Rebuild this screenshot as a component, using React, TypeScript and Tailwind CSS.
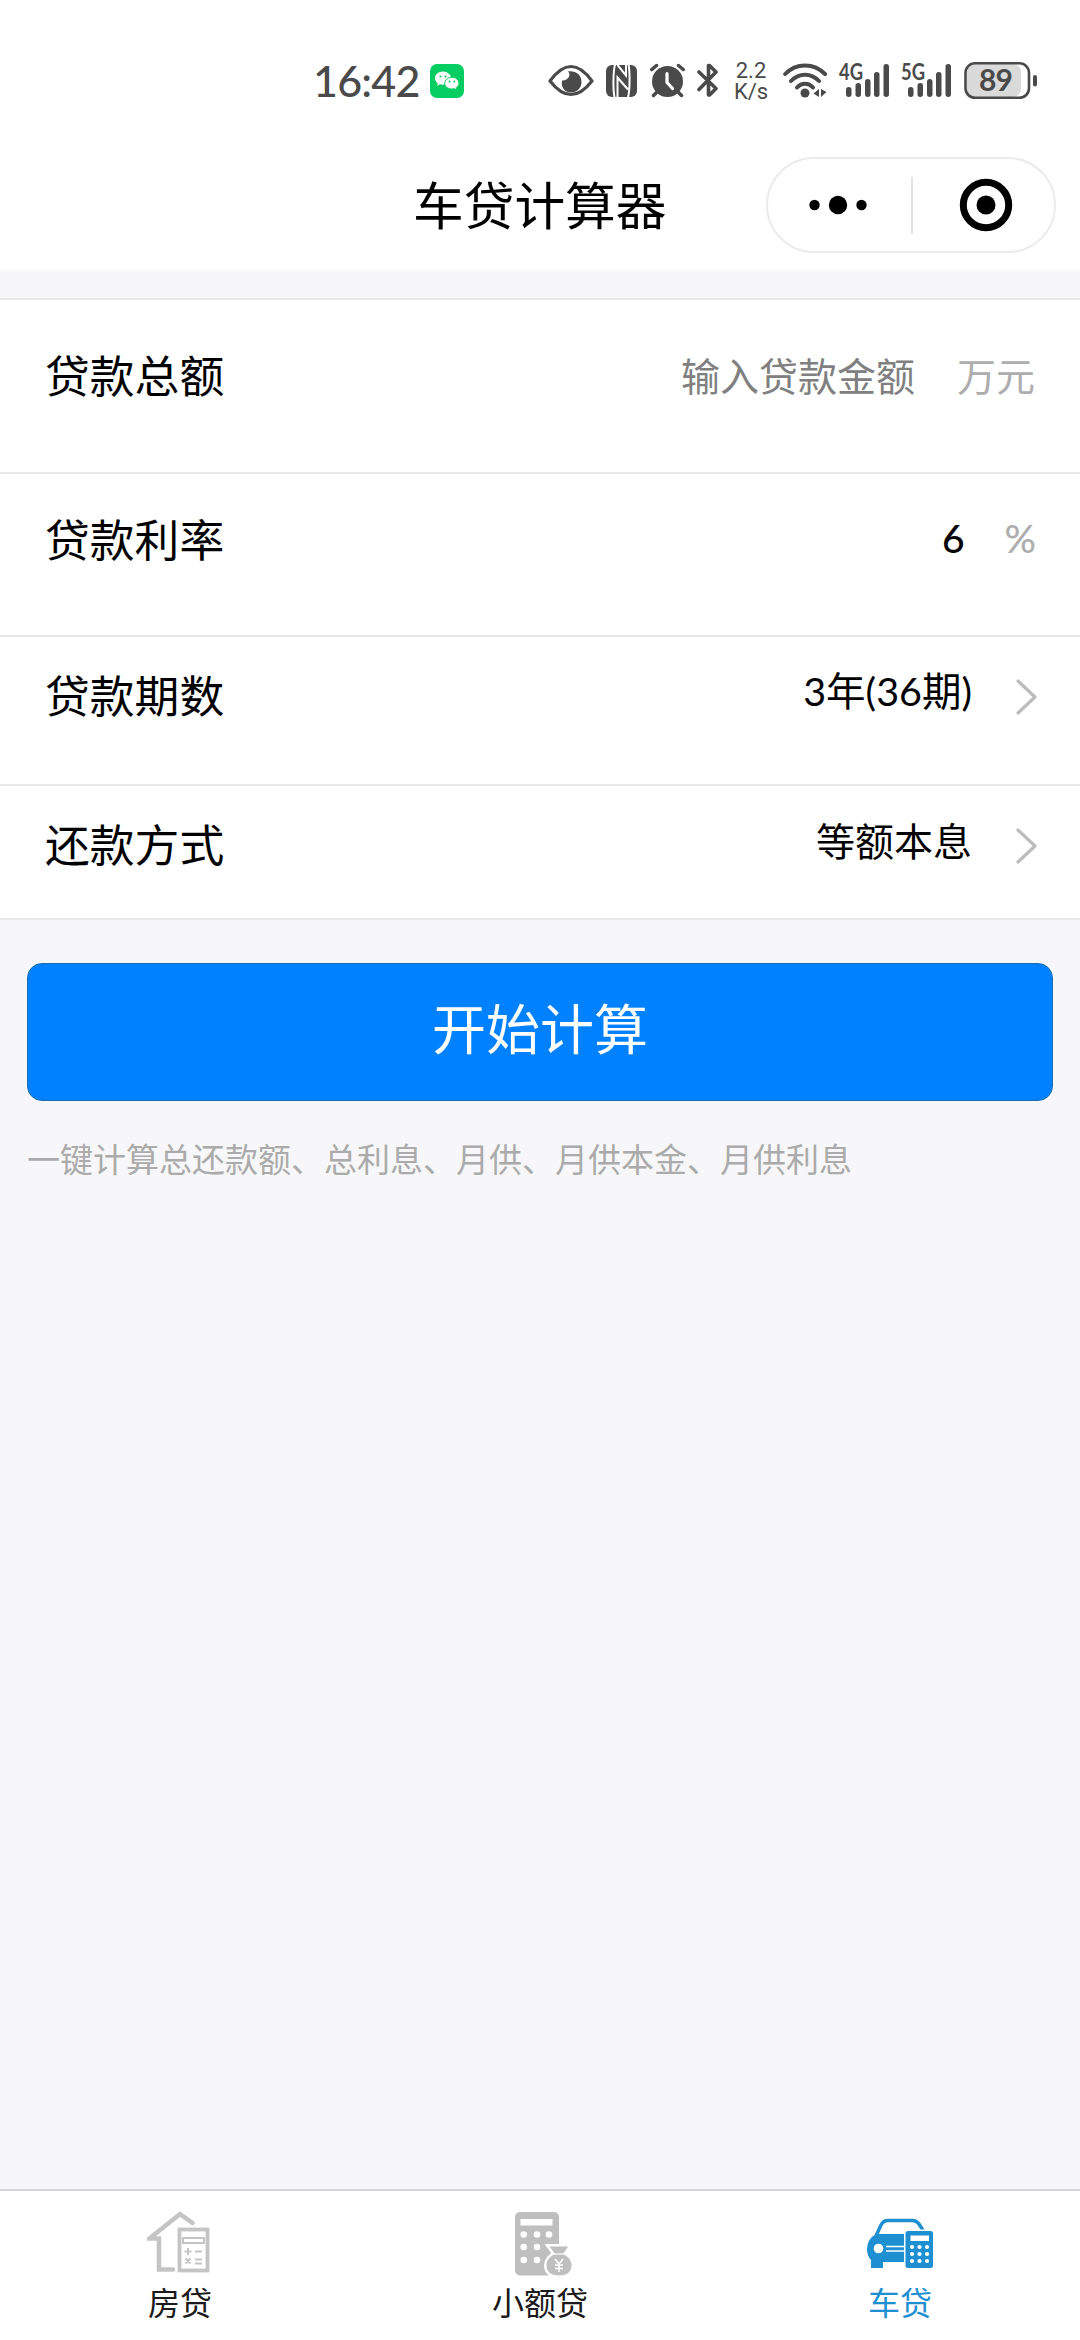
import type { ReactNode } from 'react';

const INK = '#4a4a4a';

function EyeIcon() {
  return (
    <svg className="w-[46px] h-[42px]" viewBox="0 0 46 42" fill="none">
      <path d="M2 21 Q23 -8 44 21 Q23 48 2 21Z" stroke={INK} strokeWidth="3.2" strokeLinejoin="round" />
      <path d="M20 11.500C23.500 15 20 21 14 20.500C12.500 28 17.500 32.500 23 32.500C29 32.500 33.500 28 33.500 22C33.500 15 28 10.500 20 11.500Z" fill={INK} />
    </svg>
  );
}

function NfcIcon() {
  return (
    <svg className="ml-3 w-[31px] h-[42px]" viewBox="0 0 31 42" fill="none">
      <rect y="5" width="31" height="32" rx="6" fill={INK} />
      <path d="M9 4.500C7 12 7 30 8.500 37.500M22 37.500C24 30 24 12 22.500 4.500" stroke="#fff" strokeWidth="2" />
      <path d="M11.500 5L20 15.500V5M11.500 37V17.500L22 29.500" stroke="#fff" strokeWidth="2" />
    </svg>
  );
}

function AlarmIcon() {
  return (
    <svg className="ml-[13px] w-[35px] h-[42px]" viewBox="0 0 35 42" fill="none" strokeLinecap="round">
      <circle cx="17.500" cy="21.500" r="15.500" fill={INK} />
      <path d="M1.800 9.500L6.500 5.500M33.200 9.500L28.500 5.500M7 32L3.500 35.500M28 32L31.500 35.500" stroke={INK} strokeWidth="3.500" />
      <path d="M17 13.500V22.500L22.500 28.500" stroke="#fff" strokeWidth="3.200" />
    </svg>
  );
}

function BluetoothIcon() {
  return (
    <svg className="ml-3 w-[22px] h-[42px]" viewBox="0 0 22 42" fill="none">
      <path d="M2 12L19 28.500L12.500 35H11.500V5.500H12.500L19 12L2 29.500" stroke={INK} strokeWidth="3.600" strokeLinecap="round" strokeLinejoin="round" />
    </svg>
  );
}

function WifiIcon() {
  return (
    <svg className="ml-[15px] w-[45px] h-[42px]" viewBox="0 0 45 42" fill="none" strokeLinecap="round">
      <path d="M2.200 14C13 2.500 31 2.500 42 14M8 21C16 12.500 28 12.500 36 21M14 27.500C18.500 22.500 25.500 22.500 30 27.500" stroke={INK} strokeWidth="4" />
      <circle cx="22" cy="33" r="4.500" fill={INK} />
      <path d="M36 29V37L30.500 33.500ZM38 37V29L43.500 32Z" fill={INK} />
    </svg>
  );
}

function SignalIcon({ label }: { label: string }) {
  return (
    <svg className="ml-[11px] w-[51px] h-[42px] overflow-visible" viewBox="0 0 51 42" fill={INK}>
      <text x="0" y="20" textLength="24" lengthAdjust="spacingAndGlyphs" fontSize="22" fontWeight="700" fontFamily="Lato, sans-serif">{label}</text>
      <rect x="7" y="27" width="5.500" height="10" rx="2.700" />
      <rect x="16.500" y="23" width="5.500" height="14" rx="2.700" />
      <rect x="26" y="19" width="5.500" height="18" rx="2.700" />
      <rect x="35" y="12" width="5.500" height="25" rx="2.700" />
      <rect x="44.500" y="4" width="5.500" height="33" rx="2.700" />
    </svg>
  );
}

function BatteryIcon() {
  return (
    <svg className="ml-3 w-[74px] h-[42px]" viewBox="0 0 74 42" fill="none">
      <rect x="3" y="4" width="54" height="33" rx="8" fill="#dadada" />
      <rect x="1.500" y="3.300" width="63.500" height="34.500" rx="9.500" stroke={INK} strokeWidth="2.600" />
      <rect x="69" y="15" width="4" height="11.500" rx="2" fill={INK} />
      <text x="32" y="30.500" textAnchor="middle" textLength="34" fontSize="30" fontWeight="700" fontFamily="Lato, sans-serif" fill={INK}>89</text>
    </svg>
  );
}

function WechatBadge() {
  return (
    <svg className="ml-3 w-[34px] h-[34px]" viewBox="0 0 34 34">
      <rect width="34" height="34" rx="7" fill="#06cd62" />
      <path d="M13 7.500C8.500 7.500 5 10.500 5 14.200C5 16.300 6.100 18 7.800 19.200L7.200 21.700L10 20.300C11 20.600 12 20.700 13 20.700C17.500 20.700 21 17.800 21 14.200C21 10.500 17.500 7.500 13 7.500Z" fill="#fff" />
      <path d="M22 13.300C17.800 13.300 14.800 16 14.800 19.200C14.800 22.500 17.800 25 22 25C22.800 25 23.600 24.900 24.300 24.700L27 26L26.400 23.700C28 22.600 29 21 29 19.200C29 16 26 13.300 22 13.300Z" fill="#fff" stroke="#06cd62" />
      <g fill="#06cd62">
        <circle cx="10.500" cy="12.500" r="1.100" />
        <circle cx="15.500" cy="12.500" r="1.100" />
        <circle cx="19.500" cy="17.500" r="1" />
        <circle cx="24.300" cy="17.500" r="1" />
      </g>
    </svg>
  );
}

function StatusBar() {
  return (
    <div className="flex h-[150px] items-start pt-[60px] pl-[313px] text-[#4a4a4a]">
      <div className="flex h-[42px] w-[235px] items-center">
        <span className="w-[105px] whitespace-nowrap font-[Lato] text-[43px] leading-[42px] font-medium tracking-[-0.8px]">16:42</span>
        <WechatBadge />
      </div>
      <EyeIcon />
      <NfcIcon />
      <AlarmIcon />
      <BluetoothIcon />
      <div className="ml-[15px] flex w-[34px] flex-col items-center font-[Roboto] text-[22px] leading-[21px]">
        <span>2.2</span>
        <span>K/s</span>
      </div>
      <WifiIcon />
      <SignalIcon label="4G" />
      <SignalIcon label="5G" />
      <BatteryIcon />
    </div>
  );
}

function Header() {
  return (
    <header className="flex h-[120px] items-start justify-between pt-[7px] pr-6 pl-[413px]">
      <h1 className="text-[50.7px] leading-[93px]">车贷计算器</h1>
      <div className="flex h-[96px] w-[290px] items-center rounded-full border-2 border-[#ebebeb]">
        <svg className="w-[143px] h-[60px]" viewBox="0 0 143 60">
          <circle cx="46.500" cy="30" r="5.200" />
          <circle cx="70" cy="30" r="9.200" />
          <circle cx="93.500" cy="30" r="5.200" />
        </svg>
        <div className="h-[57px] w-0.5 bg-[#e2e2e2]" />
        <svg className="w-[141px] h-[60px]" viewBox="0 0 141 60">
          <circle cx="73" cy="30" r="22.700" fill="none" stroke="#000" strokeWidth="7" />
          <circle cx="73" cy="30" r="9.500" />
        </svg>
      </div>
    </header>
  );
}

function Chevron() {
  return (
    <svg className="ml-[43px] mt-[5px] w-[22px] h-[38px]" viewBox="0 0 22 38" fill="none">
      <path d="M3 3L20 19L3 35" stroke="#bcbcbc" strokeWidth="3.200" strokeLinecap="round" strokeLinejoin="round" />
    </svg>
  );
}

function Row({ label, className, children }: { label: string; className: string; children: ReactNode }) {
  return (
    <div className={`flex items-start justify-between border-b-2 border-[#e8e8e8] pl-[45px] ${className}`}>
      <span className="text-[44.8px] leading-[60px]">{label}</span>
      <div className="flex h-[60px] items-center text-[39px]">{children}</div>
    </div>
  );
}

function HouseIcon() {
  return (
    <svg className="w-[66px] h-[66px]" viewBox="0 0 66 66" fill="none" stroke="#c4c4c4">
      <path d="M45.500 12L33 3L2.500 27.500H12V58.500H26" strokeWidth="4.500" strokeLinecap="round" />
      <rect x="32.500" y="18.500" width="28" height="41" strokeWidth="3.800" />
      <rect x="36" y="27" width="21" height="5" strokeWidth="2" />
      <path d="M37.500 40.500H44.500M41 37V44M48 40.500H55M38.500 47.500L43.500 52.500M43.500 47.500L38.500 52.500M48 48.500H55M48 52.500H55" strokeWidth="2" />
    </svg>
  );
}

function LoanIcon() {
  return (
    <svg className="w-[66px] h-[66px]" viewBox="0 0 66 66" fill="#bfbfbf">
      <rect x="8" y="1" width="44" height="63.500" rx="5" />
      <g fill="#fff">
        <rect x="13.500" y="8" width="32" height="6.500" />
        <circle cx="16.700" cy="23.500" r="3.300" />
        <circle cx="30" cy="23.500" r="3.300" />
        <circle cx="42" cy="23.500" r="3.300" />
        <circle cx="16.700" cy="36" r="3.300" />
        <circle cx="30" cy="36" r="3.300" />
        <circle cx="16.700" cy="49" r="3.300" />
        <circle cx="30" cy="49" r="3.300" />
      </g>
      <path d="M42.500 35.500H61L56 43C61.500 45.500 64.500 49.500 64.500 54.500C64.500 61.500 59 64.500 52 64.500C45 64.500 39.500 61.500 39.500 54.500C39.500 49.500 42.500 45.500 48 43Z" stroke="#fff" strokeWidth="5" paintOrder="stroke" />
      <path d="M46 43H58" stroke="#fff" strokeWidth="1.200" />
      <path d="M48 48L52 53L56 48M52 53V61M48 54H56M48 57.500H56" fill="none" stroke="#fff" strokeWidth="1.500" />
    </svg>
  );
}

function CarIcon() {
  return (
    <svg className="w-[68px] h-[66px]" viewBox="0 0 68 66" fill="#1e90d2">
      <path d="M10 25L15 14Q17.500 9.500 22 9.500H46Q50.500 9.500 53 13L58 21" fill="none" stroke="#1e90d2" strokeWidth="3.500" />
      <path d="M10 23H39V51H17V57H5V49Q1 45 1 38Q1 28 10 23Z" />
      <circle cx="12.500" cy="37.500" r="4.800" fill="#fff" />
      <path d="M20 35.500H39M20 40H39" stroke="#fff" strokeWidth="1.600" />
      <rect x="39.500" y="20" width="27.500" height="37" rx="2.500" stroke="#fff" strokeWidth="3" paintOrder="stroke" />
      <g fill="#fff">
        <rect x="44.500" y="24.500" width="18.500" height="5.500" />
        {[36, 43, 50].map((cy) =>
          [46, 53.500, 61].map((cx) => <circle key={`${cx}-${cy}`} cx={cx} cy={cy} r="2.100" />)
        )}
      </g>
    </svg>
  );
}

const tabs = [
  { name: '房贷', icon: <HouseIcon />, color: 'text-[#1a1a1a]' },
  { name: '小额贷', icon: <LoanIcon />, color: 'text-[#1a1a1a]' },
  { name: '车贷', icon: <CarIcon />, color: 'text-[#1e90d2]' },
];

export default function App() {
  return (
    <div className="flex h-[2340px] w-[1080px] flex-col overflow-hidden bg-[#f7f7f9] font-['Noto_Sans_CJK_SC',sans-serif] text-black">
      <div className="bg-white">
        <StatusBar />
        <Header />
      </div>

      <main className="flex-1">
        <div className="mt-7 border-t-2 border-[#e8e8e8] bg-white">
          <Row label="贷款总额" className="h-[174px] pt-[44px] pr-[45px]">
            <span className="text-[#808080]">输入贷款金额</span>
            <span className="ml-[42px] text-[#adadad]">万元</span>
          </Row>
          <Row label="贷款利率" className="h-[163px] pt-[34px] pr-[44px]">
            <span className="font-[Lato] font-medium">6</span>
            <span className="ml-[40px] font-[Lato] font-medium text-[#adadad]">%</span>
          </Row>
          <Row label="贷款期数" className="h-[149px] pt-[27px] pr-[43px]">
            <span className="-mt-[6px] font-[Lato,'Noto_Sans_CJK_SC',sans-serif] text-[39.5px]">3年(36期)</span>
            <Chevron />
          </Row>
          <Row label="还款方式" className="h-[134px] pt-[27px] pr-[43px]">
            <span className="-mt-[8px]">等额本息</span>
            <Chevron />
          </Row>
        </div>

        <div className="px-[27px] pt-[43px]">
          <button className="block h-[138px] w-full rounded-[15px] border border-[#1b6dad] bg-[#0081ff] pb-[10px] text-[54px] leading-[126px] text-white">
            开始计算
          </button>
          <p className="mt-[32px] text-[33px] leading-[50px] text-[#ababab]">一键计算总还款额、总利息、月供、月供本金、月供利息</p>
        </div>
      </main>

      <nav className="grid h-[151px] grid-cols-3 border-t-2 border-[#d6d6d6] bg-white">
        {tabs.map((tab) => (
          <div key={tab.name} className={`flex flex-col items-center pt-5 ${tab.color}`}>
            {tab.icon}
            <span className="text-[32px] leading-[48px]">{tab.name}</span>
          </div>
        ))}
      </nav>
    </div>
  );
}
